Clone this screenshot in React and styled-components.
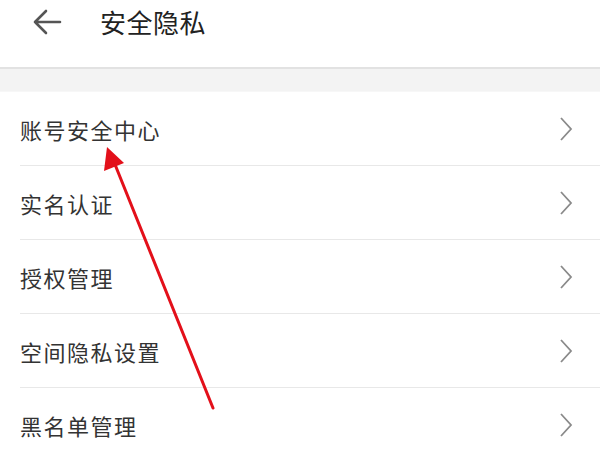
import React from "react";
import styled, { createGlobalStyle } from "styled-components";

const GlobalStyle = createGlobalStyle`
  html, body {
    margin: 0;
    padding: 0;
    background: #ffffff;
    font-family: "Noto Sans CJK SC", "Noto Sans", sans-serif;
  }
`;

const items = ["账号安全中心", "实名认证", "授权管理", "空间隐私设置", "黑名单管理"];

const App = () => (
  <>
    <GlobalStyle />
    <Page>
      <Header>
        <BackButton aria-label="back">
          <svg width="30" height="26" viewBox="0 0 30 26" fill="none">
            <path
              d="M28 13H3M14 2L3 13l11 11"
              stroke="#555"
              strokeWidth="2.6"
              strokeLinecap="round"
              strokeLinejoin="round"
            />
          </svg>
        </BackButton>
        <Title>安全隐私</Title>
      </Header>
      <Gap />
      <List>
        {items.map((label) => (
          <Row key={label}>
            <Label>{label}</Label>
            <svg width="14" height="26" viewBox="0 0 14 26" fill="none">
              <path d="M2 2l10 11L2 24" stroke="#8a8a8a" strokeWidth="1.8" />
            </svg>
          </Row>
        ))}
      </List>
      <Pointer width="600" height="450" viewBox="0 0 600 450">
        <line x1="213" y1="408" x2="114" y2="162" stroke="#e3101a" strokeWidth="3" strokeLinecap="round" />
        <polygon points="107,147 104,171 124,163" fill="#e3101a" />
      </Pointer>
    </Page>
  </>
);

const Page = styled.div`
  position: relative;
  width: 600px;
  height: 450px;
  overflow: hidden;
  background: #ffffff;
`;

const Header = styled.div`
  height: 67px;
  display: flex;
  align-items: flex-start;
  padding-top: 7px;
  box-sizing: border-box;
  background: #ffffff;
`;

const BackButton = styled.div`
  width: 100px;
  height: 30px;
  display: flex;
  align-items: center;
  padding-left: 32px;
  box-sizing: border-box;
`;

const Title = styled.div`
  font-size: 26px;
  line-height: 30px;
  color: #222;
  letter-spacing: 0.5px;
`;

const Gap = styled.div`
  height: 22px;
  background: #f3f3f3;
  border-top: 2px solid #e2e2e2;
  border-bottom: 1px solid #f7f7f7;
`;

const List = styled.div`
  display: flex;
  flex-direction: column;
  padding-left: 20px;
`;

const Row = styled.div`
  height: 73px;
  display: flex;
  align-items: center;
  justify-content: space-between;
  padding-right: 27px;
  border-bottom: 1px solid #e8e8e8;
`;

const Label = styled.span`
  font-size: 22px;
  color: #333;
  letter-spacing: 1.5px;
`;

const Pointer = styled.svg`
  position: absolute;
  left: 0;
  top: 0;
  pointer-events: none;
`;

export default App;
